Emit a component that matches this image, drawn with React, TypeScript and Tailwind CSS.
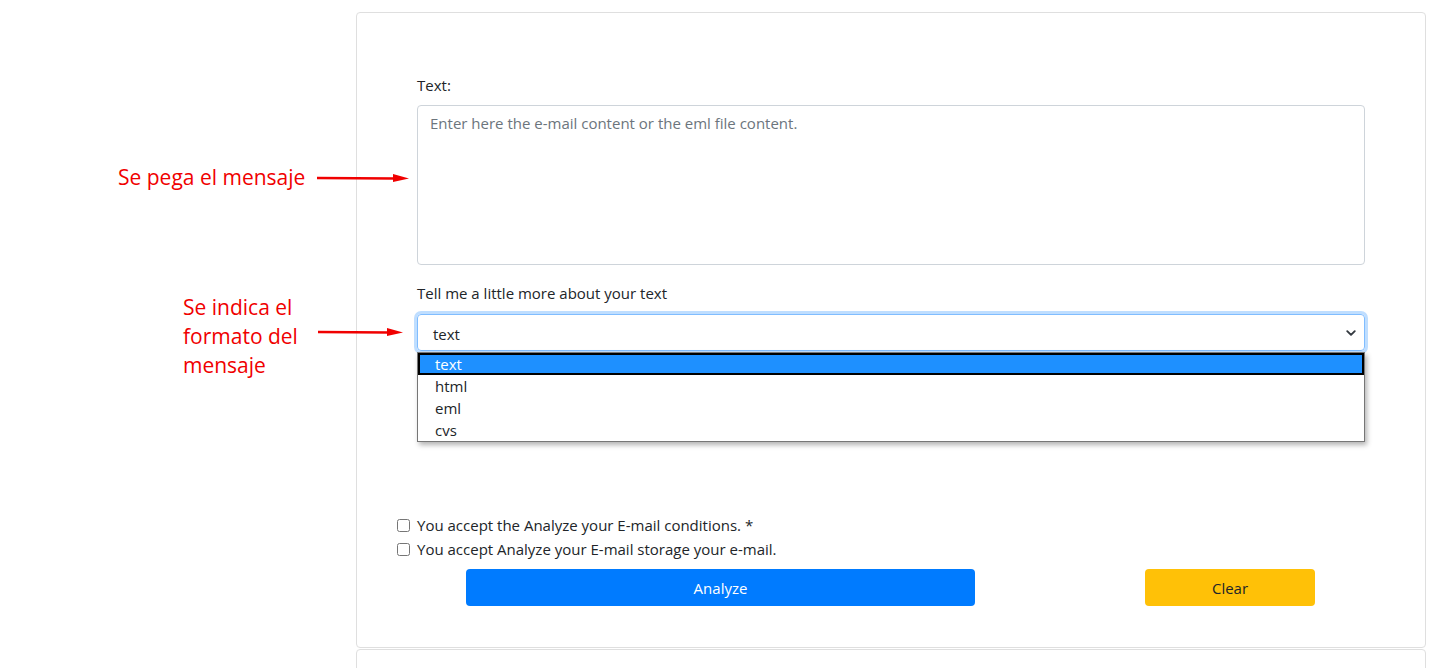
import { useState } from 'react';

const font = { fontFamily: '"Open Sans", "Noto Sans", sans-serif' };

function Arrow({ width }: { width: number }) {
  return (
    <svg width={width} height="12" viewBox={`0 0 ${width} 12`}>
      <line x1="0" y1="6" x2={width - 14} y2="6.5" stroke="#f00000" strokeWidth="2.5" />
      <polygon points={`${width - 16},2 ${width},6.5 ${width - 16},10`} fill="#f00000" />
    </svg>
  );
}

export default function App() {
  const [format, setFormat] = useState('text');
  const options = ['text', 'html', 'eml', 'cvs'];

  return (
    <div className="relative w-[1448px] h-[668px] overflow-hidden bg-white text-[#212529]" style={font}>
      {/* Annotations */}
      <div className="absolute left-[118px] top-[163px] flex items-center gap-[12px] text-[21px] text-[#f00000] leading-[29px]">
        <span>Se pega el mensaje</span>
        <Arrow width={92} />
      </div>
      <div className="absolute left-[183px] top-[293px] text-[21px] text-[#f00000] leading-[29px]">
        <p>Se indica el</p>
        <p>formato del</p>
        <p>mensaje</p>
      </div>
      <div className="absolute left-[318px] top-[326px] z-10">
        <Arrow width={85} />
      </div>

      <div className="flex pt-[12px] pl-[356px] pr-[22px]">
        <div className="flex-1 flex flex-col">
          <div className="border border-[#dfdfdf] rounded-[4px] h-[636px] pt-[63px] text-[15px]">
            <div className="px-[60px]">
              <label className="block mb-[11px] leading-[18px]">Text:</label>
              <textarea
                className="block w-full h-[160px] border border-[#ced4da] rounded-[4px] px-[12px] py-[6px] resize-none outline-none placeholder:text-[#6c757d] text-[15px]"
                placeholder="Enter here the e-mail content or the eml file content."
              />
              <label className="block mt-[19px] mb-[12px] leading-[18px]">Tell me a little more about your text</label>
              <div className="relative">
                <div className="flex items-center justify-between h-[37px] border border-[#80bdff] rounded-[4px] shadow-[0_0_0_3px_rgba(0,123,255,0.25)] pl-[15px] pr-[8px] pt-[3px]">
                  <span>{format}</span>
                  <svg width="10" height="10" viewBox="0 0 16 16" className="-mt-[2px]">
                    <path d="M2 5l6 6 6-6" fill="none" stroke="#343a40" strokeWidth="3" strokeLinecap="round" strokeLinejoin="round" />
                  </svg>
                </div>
                {/* Open native list */}
                <div className="absolute left-0 right-0 top-[38px] bg-white border border-[#767676] shadow-[2px_3px_5px_rgba(0,0,0,0.3)] z-10 leading-[22px]">
                  {options.map((o) => (
                    <div
                      key={o}
                      onClick={() => setFormat(o)}
                      className={
                        o === format
                          ? 'bg-[#1e90ff] text-white border-2 border-black pl-[15px] leading-[18px]'
                          : 'pl-[17px]'
                      }
                    >
                      {o}
                    </div>
                  ))}
                </div>
              </div>
            </div>

            <div className="px-[40px] mt-[162px] leading-[24px]">
              <label className="flex items-center gap-[7px]">
                <input type="checkbox" className="w-[13px] h-[13px]" />
                You accept the Analyze your E-mail conditions. *
              </label>
              <label className="flex items-center gap-[7px]">
                <input type="checkbox" className="w-[13px] h-[13px]" />
                You accept Analyze your E-mail storage your e-mail.
              </label>
              <div className="flex mt-[8px]">
                <button className="ml-[69px] w-[509px] h-[37px] bg-[#007bff] text-white rounded-[4px]">Analyze</button>
                <button className="ml-[170px] w-[170px] h-[37px] bg-[#ffc107] text-[#212529] rounded-[4px]">Clear</button>
              </div>
            </div>
          </div>
          <div className="mt-[1px] border border-[#dfdfdf] rounded-t-[4px] h-[40px]" />
        </div>
      </div>
    </div>
  );
}
